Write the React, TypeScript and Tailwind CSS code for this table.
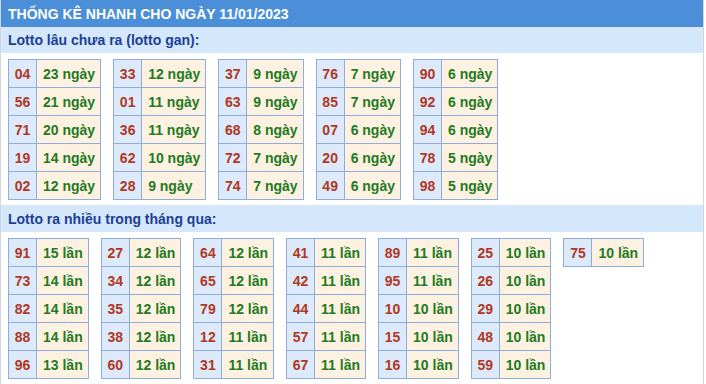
import React from "react";

type Item = [string, string];

const gan: Item[][] = [
  [["04", "23 ngày"], ["56", "21 ngày"], ["71", "20 ngày"], ["19", "14 ngày"], ["02", "12 ngày"]],
  [["33", "12 ngày"], ["01", "11 ngày"], ["36", "11 ngày"], ["62", "10 ngày"], ["28", "9 ngày"]],
  [["37", "9 ngày"], ["63", "9 ngày"], ["68", "8 ngày"], ["72", "7 ngày"], ["74", "7 ngày"]],
  [["76", "7 ngày"], ["85", "7 ngày"], ["07", "6 ngày"], ["20", "6 ngày"], ["49", "6 ngày"]],
  [["90", "6 ngày"], ["92", "6 ngày"], ["94", "6 ngày"], ["78", "5 ngày"], ["98", "5 ngày"]],
];

const nhieu: Item[][] = [
  [["91", "15 lần"], ["73", "14 lần"], ["82", "14 lần"], ["88", "14 lần"], ["96", "13 lần"]],
  [["27", "12 lần"], ["34", "12 lần"], ["35", "12 lần"], ["38", "12 lần"], ["60", "12 lần"]],
  [["64", "12 lần"], ["65", "12 lần"], ["79", "12 lần"], ["12", "11 lần"], ["31", "11 lần"]],
  [["41", "11 lần"], ["42", "11 lần"], ["44", "11 lần"], ["57", "11 lần"], ["67", "11 lần"]],
  [["89", "11 lần"], ["95", "11 lần"], ["10", "10 lần"], ["15", "10 lần"], ["16", "10 lần"]],
  [["25", "10 lần"], ["26", "10 lần"], ["29", "10 lần"], ["48", "10 lần"], ["59", "10 lần"]],
  [["75", "10 lần"]],
];

function Col({ items }: { items: Item[] }) {
  return (
    <div className="self-start grid grid-cols-[28px_auto] auto-rows-[28px] border-l border-t border-[#8eacdc]">
      {items.map(([n, v]) => (
        <React.Fragment key={n}>
          <div className="flex items-center justify-center border-r border-b border-[#8eacdc] bg-[#dceafb] text-[#b0381f]">
            {n}
          </div>
          <div className="flex items-center pl-[6px] pr-[5px] border-r border-b border-[#8eacdc] bg-[#fdf2e1] text-[#237a23] whitespace-nowrap">
            {v}
          </div>
        </React.Fragment>
      ))}
    </div>
  );
}

export default function App() {
  return (
    <div
      className="w-[704px] border-x border-[#cfd6de] bg-white text-[14px] font-bold leading-[16px]"
      style={{ fontFamily: '"Liberation Sans", Arial, sans-serif' }}
    >
      <div className="h-[27px] bg-[#4b8fd9] text-white px-[7px] flex items-center">
        THỐNG KÊ NHANH CHO NGÀY 11/01/2023
      </div>
      <div className="h-[26px] bg-[#d5e7fb] text-[#1c3f94] px-[7px] flex items-center">
        Lotto lâu chưa ra (lotto gan):
      </div>
      <div className="flex gap-[12px] px-[7px] pt-[6px] pb-[5px]">
        {gan.map((c, i) => (
          <Col key={i} items={c} />
        ))}
      </div>
      <div className="h-[27px] bg-[#d5e7fb] text-[#1c3f94] px-[7px] flex items-center">
        Lotto ra nhiều trong tháng qua:
      </div>
      <div className="flex gap-[12px] px-[7px] pt-[6px] pb-[6px]">
        {nhieu.map((c, i) => (
          <Col key={i} items={c} />
        ))}
      </div>
    </div>
  );
}
